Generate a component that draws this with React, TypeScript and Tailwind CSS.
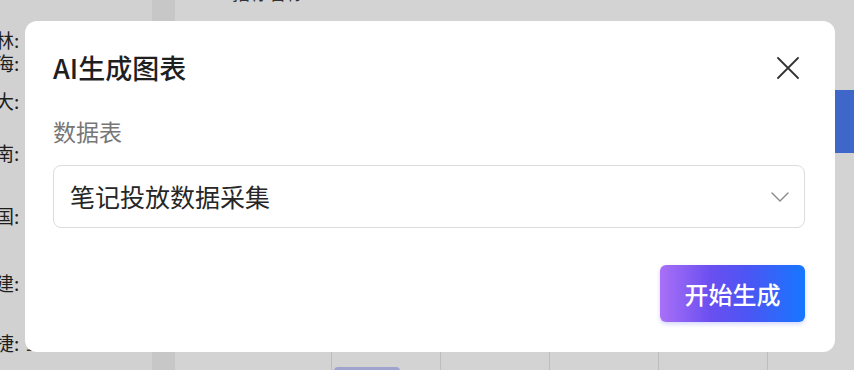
const sideLabels = [
  { name: "林", top: "mt-[30px]" },
  { name: "海", top: "mt-[4px]" },
  { name: "大", top: "mt-[19px]" },
  { name: "南", top: "mt-[33px]" },
  { name: "国", top: "mt-[44px]" },
  { name: "建", top: "mt-[48px]" },
  { name: "捷", top: "mt-[41px]" },
];

function BackgroundPage() {
  return (
    <div className="flex h-[370px] w-[854px] overflow-hidden bg-[#d3d3d3]">
      {/* left list */}
      <div className="flex w-[152px] shrink-0 flex-col bg-[#d1d1d1] text-[19px] leading-[19px] text-[#1e1e1e]">
        {sideLabels.map((l) => (
          <div key={l.name} className={`${l.top} -ml-[5px] flex whitespace-nowrap`}>
            <span>{l.name}:</span>
            <span className="ml-[6px] text-[#333]">1</span>
          </div>
        ))}
      </div>
      <div className="w-[23px] shrink-0 bg-[#c7c7c7]" />
      <div className="relative flex min-w-0 flex-1 flex-col overflow-hidden">
        <div className="-mt-[20px] ml-[57px] text-[18px] leading-[24px] text-[#333]">指标名称</div>
        <div className="flex flex-1 justify-end">
          <div className="mt-[86px] h-[63px] w-[19px] bg-[#3f66c9]" />
        </div>
        {/* table header row peeking from below */}
        <div className="flex h-[18px] pl-[156px]">
          {[0, 1, 2, 3, 4].map((i) => (
            <div key={i} className="relative w-[109px] shrink-0 border-l border-[#bdbdbd]">
              {i === 0 && <div className="absolute left-[2px] top-[15px] h-[6px] w-[66px] rounded-t-[4px] bg-[#9fa4cf]" />}
            </div>
          ))}
        </div>
      </div>
    </div>
  );
}

export default function App() {
  return (
    <div className="relative h-[370px] w-[854px] overflow-hidden font-['Noto_Sans_CJK_SC','Noto_Sans',sans-serif]">
      <BackgroundPage />

      {/* dialog */}
      <div className="absolute left-[25px] top-[21px] flex h-[331px] w-[810px] flex-col rounded-[12px] bg-white pb-[30px] pl-[28px] pr-[30px] pt-[29px]">
        <div className="flex items-center justify-between">
          <h2 className="text-[27px] font-medium leading-[36px] text-[#1f1f1f]">AI生成图表</h2>
          <svg className="mr-[6px] h-[22px] w-[22px] text-[#333]" viewBox="0 0 22 22" fill="none" stroke="currentColor" strokeWidth="1.8" strokeLinecap="round">
            <path d="M1 1 21 21M21 1 1 21" />
          </svg>
        </div>

        <div className="mt-[29px] text-[23px] leading-[32px] text-[#777]">数据表</div>

        <div className="mt-[18px] flex h-[63px] items-center justify-between rounded-[8px] border border-[#dcdcdc] pl-[16px] pr-[15px]">
          <span className="text-[25px] text-[#262626]">笔记投放数据采集</span>
          <svg className="h-[10px] w-[18px] text-[#8a8a8a]" viewBox="0 0 18 10" fill="none" stroke="currentColor" strokeWidth="1.4" strokeLinecap="round" strokeLinejoin="round">
            <path d="M1 1 9 9 17 1" />
          </svg>
        </div>

        <div className="mt-auto flex justify-end">
          <button className="h-[57px] w-[145px] rounded-[6px] bg-[linear-gradient(90deg,#a970f7_0%,#6a4ff0_35%,#4d55f4_60%,#1677ff_100%)] text-[24px] font-medium text-white shadow-[0_2px_4px_rgba(80,90,240,0.25)]">
            开始生成
          </button>
        </div>
      </div>
    </div>
  );
}
